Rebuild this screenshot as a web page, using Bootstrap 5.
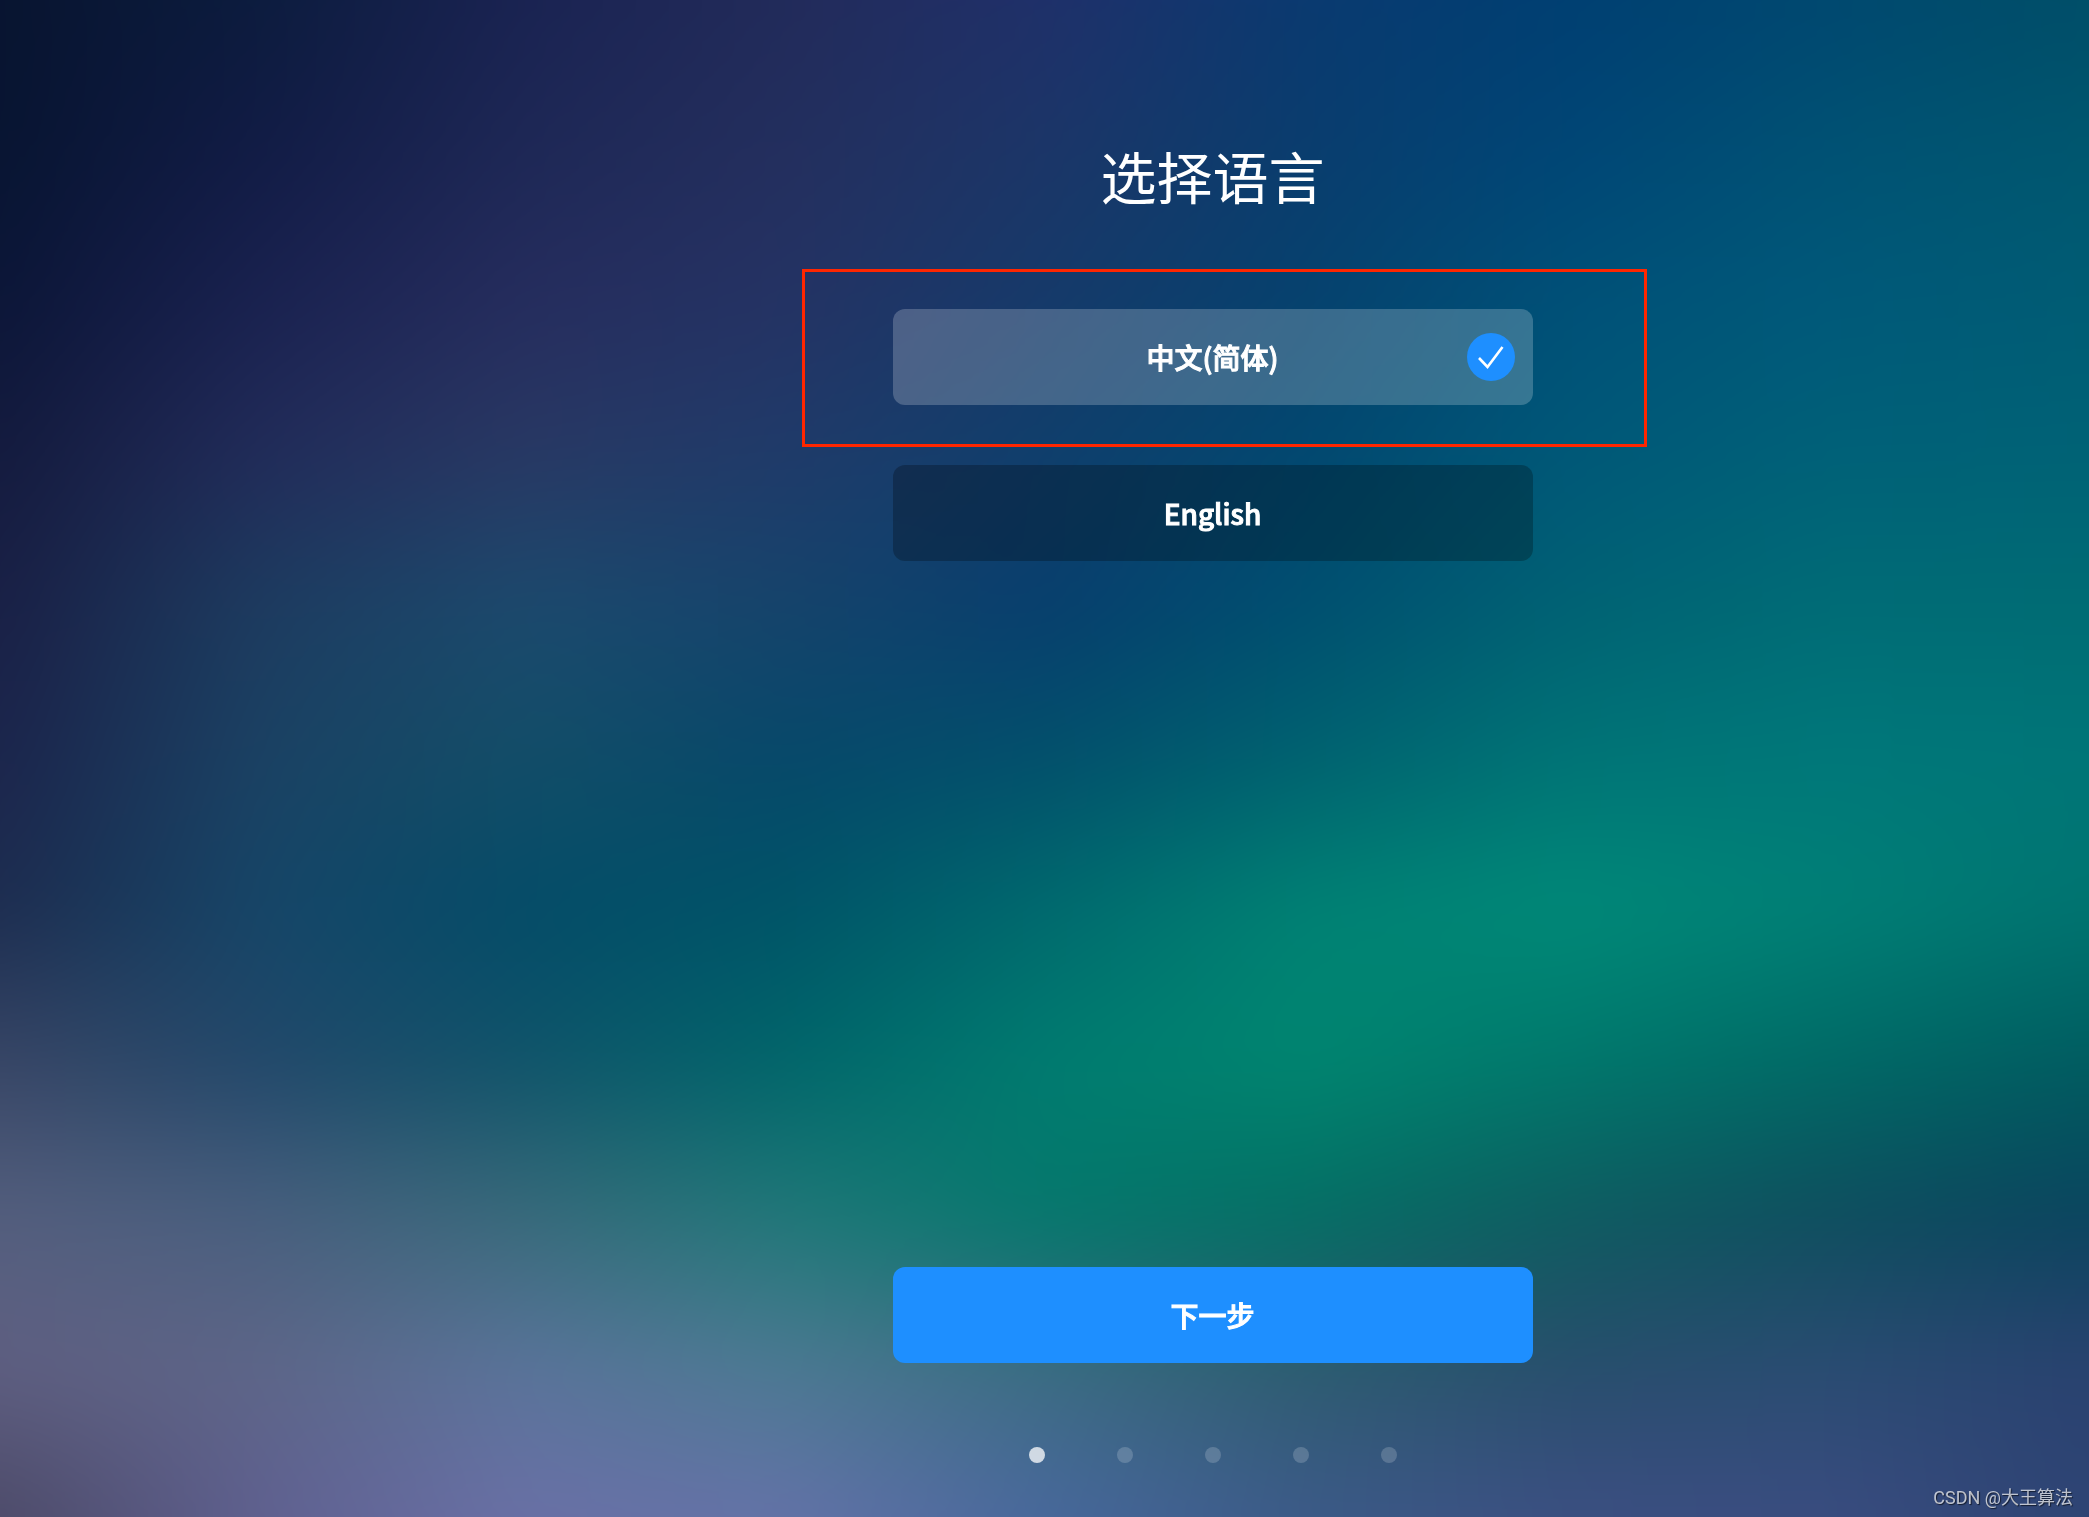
<!DOCTYPE html>
<html lang="zh-CN">
<head>
<meta charset="utf-8">
<meta name="viewport" content="width=device-width, initial-scale=1">
<title>选择语言</title>
<link href="https://cdn.jsdelivr.net/npm/bootstrap@5.3.0/dist/css/bootstrap.min.css" rel="stylesheet">
<style>
  body { font-family: "Noto Sans CJK SC", sans-serif; background: #04506a; }
  .wallpaper { position: fixed; inset: 0; z-index: -1; filter: blur(36px); overflow: visible; }
  /* each row of colour fades in over the one before it */
  .wallpaper div { position: absolute; inset: -100px; background-image: linear-gradient(90deg, var(--c));
    -webkit-mask-image: linear-gradient(180deg, transparent var(--a), #000 var(--b)); mask-image: linear-gradient(180deg, transparent var(--a), #000 var(--b)); }
  .wizard { padding: 133px 0 54px 336px; }
  .wizard-col { width: 640px; max-width: 100%; }
  .wizard-title { font-size: 56px; line-height: 84px; margin-bottom: 92px; font-weight: 400; }
  .wizard .btn { height: 96px; border: 0; border-radius: 12px; color: #fff; font-size: 28px; line-height: 42px; font-weight: 500; -webkit-text-stroke: 1px #fff; }
  .options { gap: 60px; }
  .wizard .option-btn { background: rgba(0,0,0,.25); }
  .wizard .btn-check:checked + .option-btn { background: rgba(255,255,255,.21); color: #fff; }
  .tick { right: 18px; top: 24px; }
  .wizard .next-btn { background: #1e8fff; margin-bottom: 84px; }
  .marker { inset: -40px -114px -42px -91px; border: 3px solid #ff2600; pointer-events: none; }
  .dots { gap: 72px; }
  .step-dot { width: 16px; height: 16px; border-radius: 50%; background: rgba(255,255,255,.18); }
  .step-dot.current { background: rgba(255,255,255,.75); }
  .watermark { right: 16px; bottom: 6px; font-family: Roboto, "Noto Sans CJK SC", sans-serif; font-size: 18px; line-height: 27px; color: rgba(255,255,255,.7); text-shadow: 1px 1px 1px rgba(0,0,0,.6); }
</style>
<script src="https://cdn.jsdelivr.net/npm/bootstrap@5.3.0/dist/js/bootstrap.bundle.min.js"></script>
</head>
<body>
<div class="wallpaper" id="wallpaper" aria-hidden="true"></div>

<main class="wizard min-vh-100 d-flex justify-content-center">
  <form class="wizard-col d-flex flex-column text-center">
    <h1 class="wizard-title text-white">选择语言</h1>
    <div class="options d-flex flex-column">
      <div class="position-relative">
        <input class="btn-check" type="radio" name="lang" id="lang-zh" checked>
        <label class="btn option-btn w-100 d-flex align-items-center justify-content-center" for="lang-zh">中文(简体)
          <svg class="tick position-absolute" width="48" height="48" viewBox="0 0 48 48" aria-hidden="true"><circle cx="24" cy="24" r="24" fill="#1e8fff"/><path d="M12 25l8.500 9L35.500 14" fill="none" stroke="#fff" stroke-width="2.600"/></svg>
        </label>
        <div class="marker position-absolute"></div>
      </div>
      <div>
        <input class="btn-check" type="radio" name="lang" id="lang-en">
        <label class="btn option-btn w-100 d-flex align-items-center justify-content-center" for="lang-en" lang="en">English</label>
      </div>
    </div>
    <button type="button" class="btn next-btn w-100 mt-auto">下一步</button>
    <div class="dots d-flex justify-content-center">
      <span class="step-dot current"></span><span class="step-dot"></span><span class="step-dot"></span><span class="step-dot"></span><span class="step-dot"></span>
    </div>
  </form>
</main>
<div class="watermark position-absolute">CSDN @大王算法</div>

<script>
  const rows = [
    "#081430 #0c1c3e #1a2352 #222b5a #20306a #0a3a70 #003f72 #004870 #004e68",
    "#081532 #121c46 #1e2856 #242f5e #1c3668 #0a3d6e #004676 #005274 #00576f",
    "#0c1638 #1a2250 #262d5e #253364 #163a6a #06426e #005178 #00597a #005c74",
    "#141b3e #222c5a #293964 #203b6a #103f6c #024870 #005878 #006178 #006276",
    "#1a2046 #1d3c60 #1c4a6e #16446c #083e6e #004f70 #006274 #006c76 #006c74",
    "#1c254c #1b4264 #134e68 #07486a #03506c #006270 #007476 #00787a #007678",
    "#1d2d50 #164668 #044c68 #005468 #006a6e #008274 #008a78 #008076 #007470",
    "#384666 #22486a #10546a #00666a #007c70 #008670 #00786c #006a66 #005c60",
    "#545f7e #485f7e #386a7a #207878 #04786c #046e64 #0e5c60 #0e4e5e #0a445e",
    "#5f5f82 #5e6688 #5a749a #4c7a92 #3c6c82 #2e5c70 #284e6c #2a4c72 #2a4270",
    "#4c4a68 #5f6090 #6a70a6 #6472a8 #48689c #3c5a88 #3c4f82 #3a4c80 #2e4474"
  ];
  /* the rows overhang the window by 100px on every side */
  const pos = f => `calc(100px + (100% - 200px) * ${f})`;
  const wall = document.getElementById("wallpaper");
  rows.forEach((row, i) => {
    const band = document.createElement("div");
    const cols = row.split(" ");
    band.style.setProperty("--c", cols.map((c, j) => `${c} ${pos(j / (cols.length - 1))}`).join(","));
    band.style.setProperty("--a", i ? pos((i - 1) / 10) : "-1px");
    band.style.setProperty("--b", i ? pos(i / 10) : "0px");
    wall.append(band);
  });
</script>
</body>
</html>
